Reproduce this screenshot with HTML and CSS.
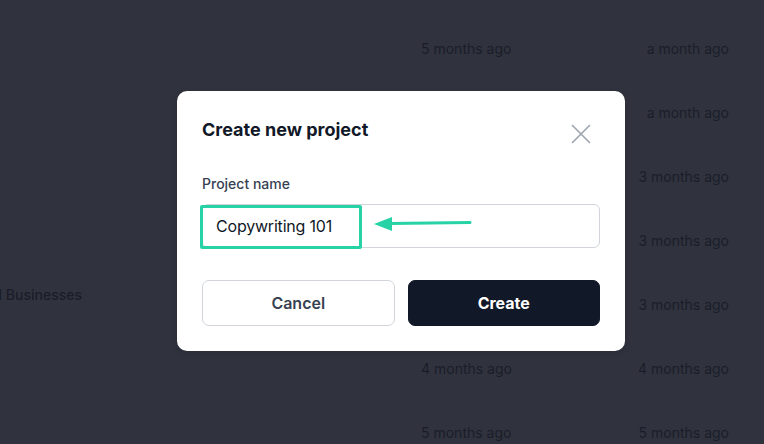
FILE: index.html
```html
<!doctype html>
<html>
<head>
<meta charset="utf-8">
<title>Projects</title>
<link rel="stylesheet" href="styles.css">
</head>
<body>
<div class="list">
    <div class="row"><div class="name"></div><div class="created">5 months ago</div><div class="updated">a month ago</div></div>
    <div class="row"><div class="name"></div><div class="created">5 months ago</div><div class="updated">a month ago</div></div>
    <div class="row"><div class="name"></div><div class="created">4 months ago</div><div class="updated">3 months ago</div></div>
    <div class="row"><div class="name"></div><div class="created">4 months ago</div><div class="updated">3 months ago</div></div>
    <div class="row"><div class="name name-up">Copywriting for Small Businesses</div><div class="created">4 months ago</div><div class="updated">3 months ago</div></div>
    <div class="row"><div class="name"></div><div class="created">4 months ago</div><div class="updated">4 months ago</div></div>
    <div class="row"><div class="name"></div><div class="created">5 months ago</div><div class="updated">5 months ago</div></div>
</div>

<div class="overlay">
    <div class="modal">
        <div class="modal-head">
            <h2 class="modal-title">Create new project</h2>
            <button class="close" type="button">
                <svg width="20" height="20" viewBox="0 0 20 20"><path d="M1 1L19 19M19 1L1 19" stroke="#9ca3af" stroke-width="1.6" fill="none"/></svg>
            </button>
        </div>
        <label class="label" for="name">Project name</label>
        <div class="field">
            <input id="name" class="input" type="text" value="Copywriting 101" spellcheck="false">
            <span class="mark"></span>
            <svg class="arrow" width="100" height="18" viewBox="0 0 100 18"><path d="M16 8.5L96 7.5" stroke="#27d3a6" stroke-width="3" stroke-linecap="round" fill="none"/><path d="M0 9L18 2L18 16Z" fill="#27d3a6"/></svg>
        </div>
        <div class="actions">
            <button class="btn btn-cancel" type="button">Cancel</button>
            <button class="btn btn-create" type="button">Create</button>
        </div>
    </div>
</div>
</body>
</html>
```

FILE: styles.css
```css
body { margin: 0; background: #30333e; font-family: Inter, "Noto Sans", sans-serif; color: #1a1d29; overflow: hidden; }
.list { padding-top: 16px; }
.row { display: grid; grid-template-columns: 82px 339px 208px 100px; height: 64px; align-items: center; font-size: 14px; white-space: nowrap; }
.name { display: flex; justify-content: flex-end; font-weight: 500; }
.name-up { padding-bottom: 20px; }
.created { grid-column: 3; }
.updated { grid-column: 4; text-align: right; }

.overlay { position: absolute; left: 0; top: 0; width: 100%; height: 100%; }
.modal { position: absolute; left: 177px; top: 91px; width: 448px; box-sizing: border-box; padding: 25px; background: #fff; border-radius: 10px; box-shadow: 0 2px 6px rgba(0,0,0,0.15); }
.modal-head { display: flex; justify-content: space-between; align-items: flex-start; }
.modal-title { margin: 0; font-size: 18px; line-height: 28px; font-weight: 700; color: #111827; }
.close { border: none; background: none; padding: 0; margin: 8px 9px 0 0; width: 20px; height: 20px; cursor: pointer; }
.close svg { display: block; }
.label { display: block; margin-top: 30px; font-size: 14px; line-height: 20px; font-weight: 500; color: #374151; }
.field { position: relative; margin-top: 10px; }
.input { display: block; width: 100%; height: 44px; box-sizing: border-box; border: 1px solid #d1d5db; border-radius: 6px; padding: 0 13px; font-family: inherit; font-size: 16px; letter-spacing: -0.2px; color: #111827; }
.input:focus { outline: none; }
.mark { position: absolute; left: -2px; top: 1px; width: 162px; height: 44px; box-sizing: border-box; border: 3px solid #27d3a6; border-radius: 2px; }
.arrow { position: absolute; left: 172px; top: 11px; }
.actions { display: flex; gap: 13px; margin-top: 32px; }
.btn { flex: 1; height: 46px; border-radius: 7px; font-family: inherit; font-size: 16px; font-weight: 600; cursor: pointer; }
.btn-cancel { background: #fff; border: 1px solid #d1d5db; color: #374151; }
.btn-create { background: #111827; border: 1px solid #111827; color: #fff; font-weight: 700; }
```
